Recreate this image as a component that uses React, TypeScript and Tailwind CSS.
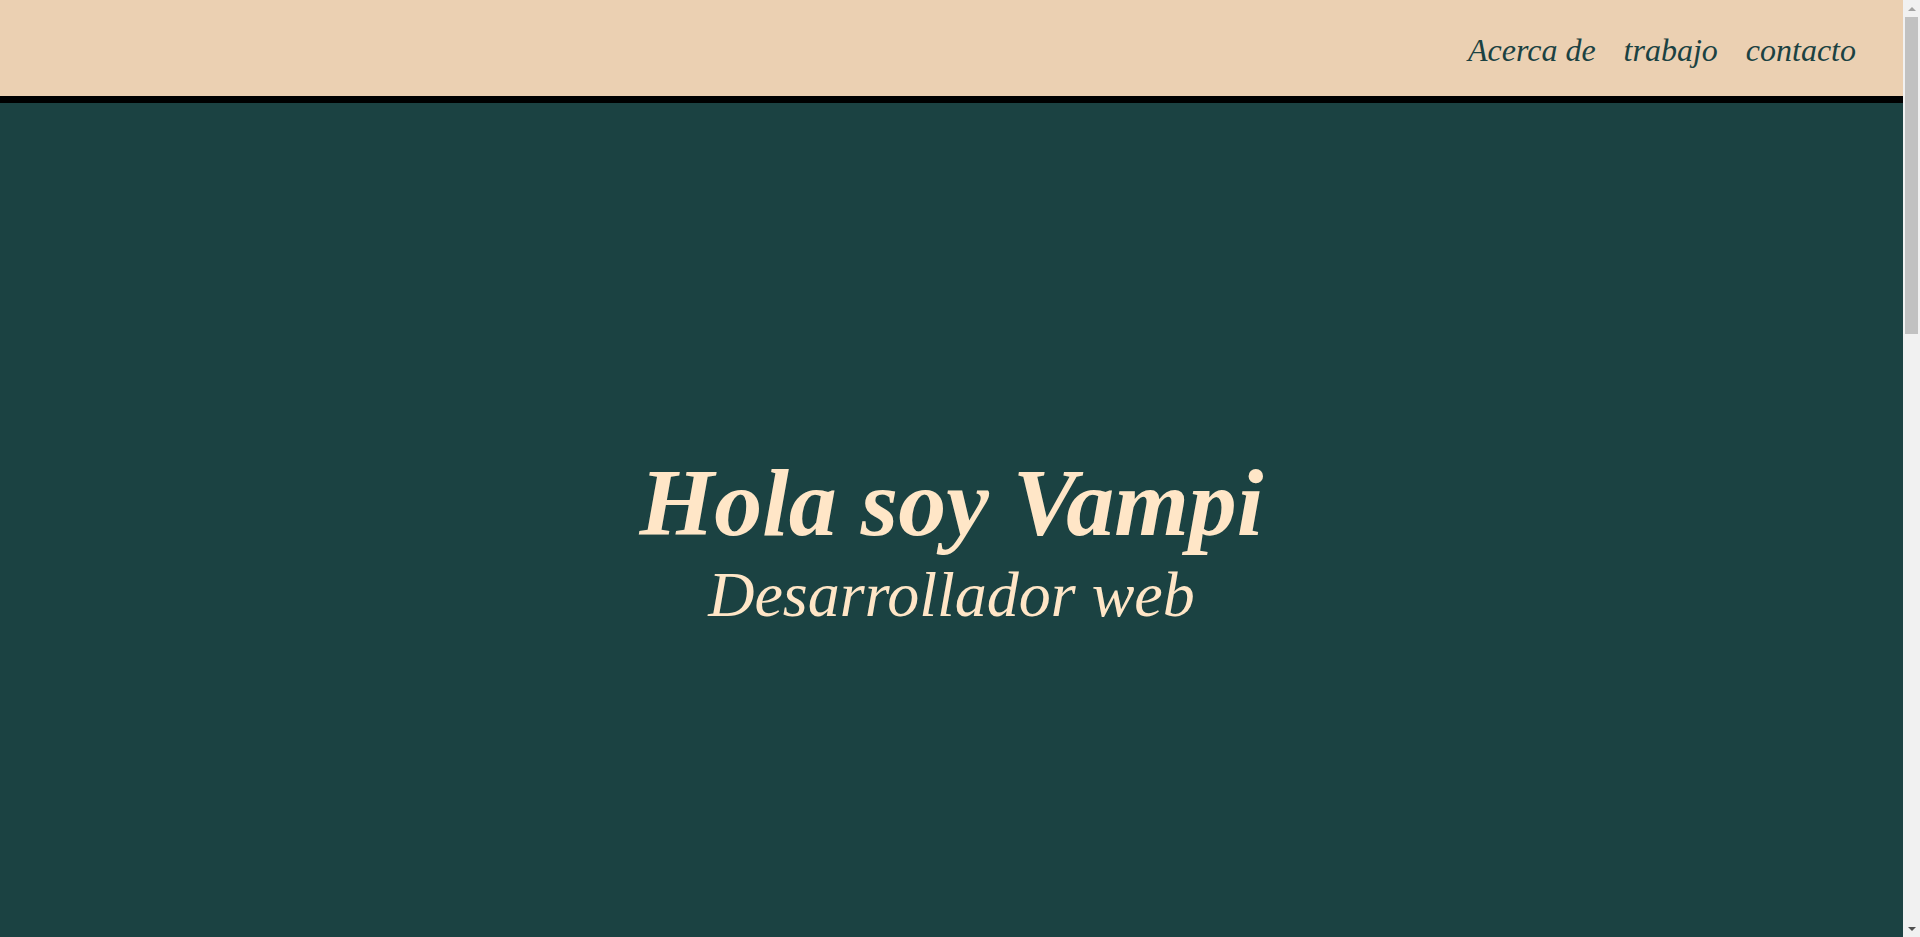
const serif = { fontFamily: '"Liberation Serif", "Times New Roman", serif' };

function Scrollbar() {
  return (
    <aside className="w-[17px] h-full bg-[#f1f1f1] flex flex-col shrink-0">
      <div className="h-[17px] flex justify-center items-center">
        <div className="w-0 h-0 border-x-[4px] border-x-transparent border-b-[4px] border-b-[#a3a3a3]" />
      </div>
      <div className="mx-[2px] h-[317px] bg-[#c1c1c1]" />
      <div className="flex-1" />
      <div className="h-[17px] flex justify-center items-center">
        <div className="w-0 h-0 border-x-[4px] border-x-transparent border-t-[4px] border-t-[#505050]" />
      </div>
    </aside>
  );
}

export default function App() {
  return (
    <div className="w-full h-screen flex flex-row overflow-hidden" style={serif}>
      <main className="flex-1 h-full bg-[#1b4242]">
        <header className="w-full h-[103px] bg-[#ebd0b2] border-b-[7px] border-black flex flex-row justify-end items-center pr-[47px] pt-1">
          <nav className="flex flex-row gap-7 text-[32px] italic text-[#1b4242]">
            <a href="#">Acerca de</a>
            <a href="#">trabajo</a>
            <a href="#">contacto</a>
          </nav>
        </header>

        <section className="w-full flex flex-col items-center pt-[345px] text-[#ffe6c7] italic">
          <h1 className="text-[96px] font-bold leading-[110px]">Hola soy Vampi</h1>
          <h2 className="text-[64px] leading-[74px]">Desarrollador web</h2>
        </section>
      </main>
      <Scrollbar />
    </div>
  );
}
